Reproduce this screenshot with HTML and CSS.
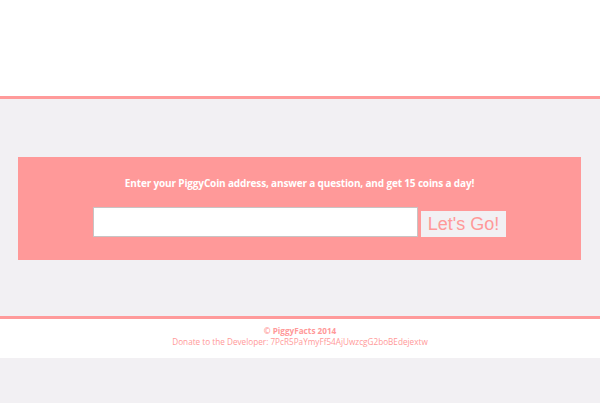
FILE: index.html
```html
<!DOCTYPE html>
<html>
<head>
<meta charset="utf-8">
<link rel="stylesheet" href="styles.css">
</head>
<body>
<header class="top"></header>
<main class="main">
  <section class="panel">
    <p class="lead">Enter your PiggyCoin address, answer a question, and get 15 coins a day!</p>
    <form class="form">
      <input class="addr" type="text">
      <button class="go" type="button">Let's Go!</button>
    </form>
  </section>
</main>
<footer class="foot">
  <div class="copy">© PiggyFacts 2014</div>
  <div class="donate">Donate to the Developer: 7PcR5PaYmyFf54AjUwzcgG2boBEdejextw</div>
</footer>
</body>
</html>
```
FILE: styles.css
```css
html, body {
  margin: 0;
  padding: 0;
  background: #f2f0f3;
  font-family: "Open Sans", "DejaVu Sans", sans-serif;
}
.top {
  height: 96px;
  background: #fff;
  border-bottom: 3px solid #ff9a9a;
}
.main {
  padding: 58px 19px 56px 18px;
}
.panel {
  background: #ff9999;
  height: 103px;
  box-sizing: border-box;
  padding-top: 19px;
  display: flex;
  flex-direction: column;
  align-items: center;
}
.lead {
  margin: 0;
  color: #fff;
  font-weight: 700;
  font-size: 10px;
  letter-spacing: -0.15px;
  line-height: 14px;
}
.form {
  margin-top: 17px;
  display: flex;
  align-items: flex-end;
  gap: 3px;
}
.addr {
  width: 325px;
  height: 30px;
  box-sizing: border-box;
  border: 1px solid #c8c4c4;
  background: #fff;
  margin: 0;
  padding: 0;
}
.go {
  width: 85px;
  height: 26px;
  box-sizing: border-box;
  border: 0;
  background: #f2f0f3;
  color: #ff9999;
  font-family: "Liberation Sans", Arial, sans-serif;
  font-size: 18px;
  padding: 0;
  margin: 0;
  line-height: 26px;
}
.foot {
  background: #fff;
  border-top: 3px solid #ff9a9a;
  height: 39px;
  text-align: center;
  color: #ff9999;
  font-size: 8.2px;
}
.copy {
  font-weight: 700;
  line-height: 11px;
  padding-top: 6px;
}
.donate {
  line-height: 11px;
}
```
